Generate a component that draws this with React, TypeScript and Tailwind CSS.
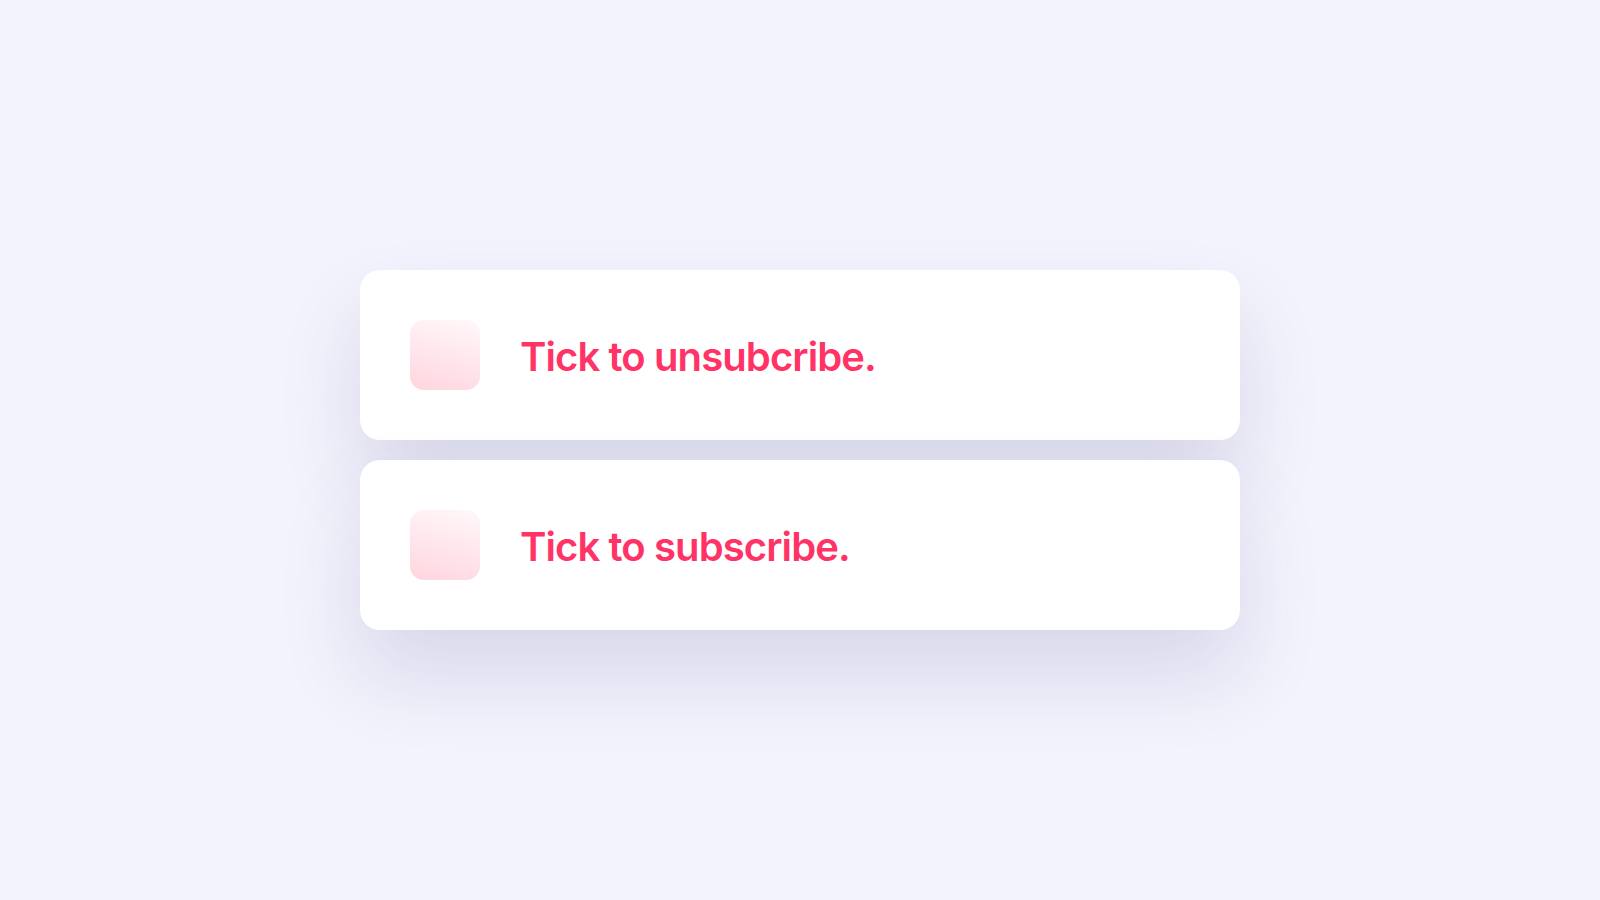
const ITEMS = ['Tick to unsubcribe.', 'Tick to subscribe.'];

export default function App() {
  return (
    <div className="w-[1600px] h-[900px] bg-[#f3f3fd] flex items-center justify-center font-['Inter',sans-serif]">
      <div className="w-[880px] flex flex-col gap-5">
        {ITEMS.map((label) => (
          <label
            key={label}
            className="h-[170px] bg-white rounded-[20px] shadow-[0_45px_80px_rgba(60,60,130,0.15)] flex items-center pl-[50px] gap-10 cursor-pointer"
          >
            <input type="checkbox" className="peer sr-only" />
            <span className="w-[70px] h-[70px] rounded-[14px] bg-[linear-gradient(195deg,#fff8fa,#ffd5df)] shrink-0" />
            <span className="text-[40px] leading-none font-semibold text-[#ff3366] tracking-[-0.9px] mt-[4px]">{label}</span>
          </label>
        ))}
      </div>
    </div>
  );
}
